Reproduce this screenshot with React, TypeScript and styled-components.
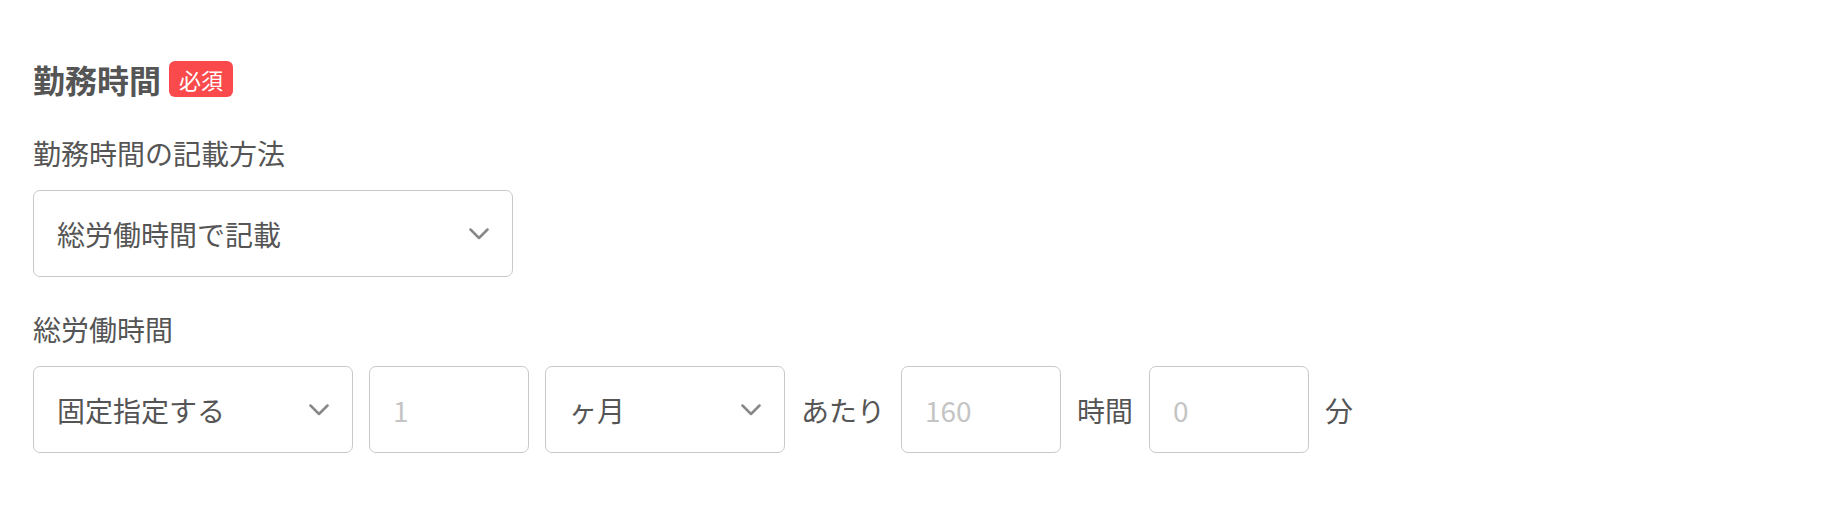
import React from "react";
import styled, { createGlobalStyle } from "styled-components";

const GlobalStyle = createGlobalStyle`
  html, body {
    margin: 0;
    padding: 0;
    background: #ffffff;
  }
  body {
    font-family: "Noto Sans CJK JP", "Noto Sans", sans-serif;
    color: #555555;
  }
  * {
    box-sizing: border-box;
  }
`;

const Page = styled.div`
  padding: 61px 32px 40px 33px;
  display: flex;
  flex-direction: column;
`;

const SectionHeader = styled.div`
  display: flex;
  align-items: center;
  gap: 8px;
  height: 36px;
`;

const SectionTitle = styled.h2`
  margin: 0;
  font-size: 32px;
  font-weight: 700;
  line-height: 36px;
  color: #555555;
`;

const RequiredBadge = styled.span`
  display: inline-flex;
  align-items: center;
  justify-content: center;
  height: 36px;
  padding: 0 10px;
  border-radius: 6px;
  background: #fb4a4c;
  color: #ffffff;
  font-size: 22px;
  line-height: 1;
`;

const Field = styled.div<{ $top: number }>`
  display: flex;
  flex-direction: column;
  gap: 16px;
  margin-top: ${(p) => p.$top}px;
`;

const FieldLabel = styled.label`
  font-size: 28px;
  line-height: 42px;
  color: #555555;
`;

const Row = styled.div`
  display: flex;
  align-items: center;
  gap: 16px;
`;

const SelectBox = styled.div<{ $width: number }>`
  display: flex;
  align-items: center;
  justify-content: space-between;
  width: ${(p) => p.$width}px;
  height: 87px;
  padding: 0 23px;
  border: 1.5px solid #c9c9c9;
  border-radius: 7px;
  background: #ffffff;
  font-size: 28px;
  color: #555555;
  cursor: pointer;
`;

const NumberInput = styled.input`
  width: 160px;
  height: 87px;
  padding: 0 23px;
  border: 1.5px solid #c9c9c9;
  border-radius: 7px;
  background: #ffffff;
  font-family: "Noto Sans CJK JP", "Noto Sans", sans-serif;
  font-size: 28px;
  color: #555555;
  outline: none;

  &::placeholder {
    color: #c4c4c4;
  }
`;

const Unit = styled.span`
  font-size: 28px;
  line-height: 42px;
  color: #555555;
  white-space: nowrap;
`;

const Chevron = () => (
  <svg width="20" height="12" viewBox="0 0 20 12" fill="none">
    <path
      d="M1.5 1.5 L10 10 L18.5 1.5"
      stroke="#888888"
      strokeWidth="2.5"
      strokeLinecap="round"
      strokeLinejoin="round"
    />
  </svg>
);

const Select = ({ width, value }: { width: number; value: string }) => (
  <SelectBox $width={width} role="combobox">
    <span>{value}</span>
    <Chevron />
  </SelectBox>
);

export default function App() {
  return (
    <>
      <GlobalStyle />
      <Page>
        <SectionHeader>
          <SectionTitle>勤務時間</SectionTitle>
          <RequiredBadge>必須</RequiredBadge>
        </SectionHeader>

        <Field $top={35}>
          <FieldLabel>勤務時間の記載方法</FieldLabel>
          <Select width={480} value="総労働時間で記載" />
        </Field>

        <Field $top={31}>
          <FieldLabel>総労働時間</FieldLabel>
          <Row>
            <Select width={320} value="固定指定する" />
            <NumberInput placeholder="1" />
            <Select width={240} value="ヶ月" />
            <Unit>あたり</Unit>
            <NumberInput placeholder="160" />
            <Unit>時間</Unit>
            <NumberInput placeholder="0" />
            <Unit>分</Unit>
          </Row>
        </Field>
      </Page>
    </>
  );
}
